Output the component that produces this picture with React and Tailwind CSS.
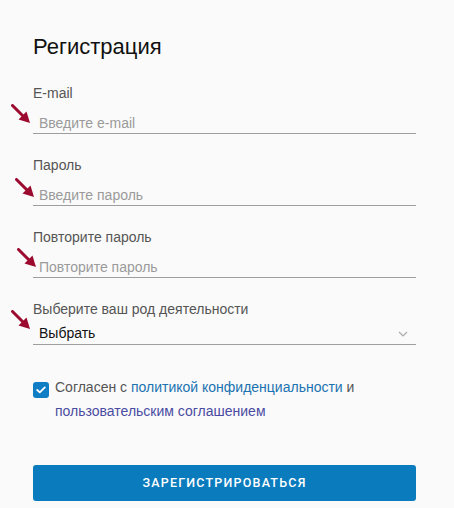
import React from "react";

function Arrow({ className }) {
  return (
    <svg className={className} width="20" height="20" viewBox="0 0 20 20">
      <line x1="1.5" y1="1.5" x2="12" y2="12" stroke="#9c0b2f" strokeWidth="3" strokeLinecap="round" />
      <polygon points="19,19 7.5,15.5 15.5,7.5" fill="#9c0b2f" />
    </svg>
  );
}

function Field({ label, placeholder, type = "text" }) {
  return (
    <div className="mb-[21px]">
      <div className="text-[14px] leading-[20px] text-[#555]">{label}</div>
      <input
        type={type}
        placeholder={placeholder}
        className="block w-full h-[31px] pt-[10px] pb-0 pl-[6px] text-[14px] leading-[20px] text-[#222] placeholder:text-[#9a9a9a] bg-transparent border-b border-[#9e9e9e] outline-none"
      />
    </div>
  );
}

export default function App() {
  return (
    <div
      className="relative w-[454px] h-[508px] bg-[#fafafa] pl-[33px] pr-[38px] pt-[33px]"
      style={{ fontFamily: '"Liberation Sans", Arial, sans-serif' }}
    >
      <h1 className="text-[22px] leading-[28px] text-[#111] font-normal mb-[22px]">Регистрация</h1>

      <Field label="E-mail" placeholder="Введите e-mail" />
      <Field label="Пароль" placeholder="Введите пароль" type="password" />
      <Field label="Повторите пароль" placeholder="Повторите пароль" type="password" />

      <div>
        <div className="text-[14px] leading-[20px] text-[#555]">Выберите ваш род деятельности</div>
        <div className="flex items-center justify-between h-[26px] pt-[3px] pl-[6px] pr-[8px] border-b border-[#9e9e9e]">
          <span className="text-[14px] leading-[20px] text-[#111]">Выбрать</span>
          <svg width="10" height="6" viewBox="0 0 10 6" className="mt-[1px]">
            <polyline points="1,1 5,5 9,1" fill="none" stroke="#aaa" strokeWidth="1.2" />
          </svg>
        </div>
      </div>

      <div className="flex items-start mt-[30px]">
        <div className="mt-[7px] w-[16px] h-[16px] shrink-0 rounded-[3px] bg-[#0f7ec4] flex items-center justify-center">
          <svg width="10" height="8" viewBox="0 0 10 8">
            <polyline points="1.2,4 3.8,6.4 8.8,1.4" fill="none" stroke="#fff" strokeWidth="1.8" strokeLinecap="round" strokeLinejoin="round" />
          </svg>
        </div>
        <p className="ml-[6px] text-[14px] leading-[24px] text-[#555]">
          Согласен с <span className="text-[#1a72b0]">политикой конфиденциальности</span> и{" "}
          <span className="text-[#4a4ca2]">пользовательским соглашением</span>
        </p>
      </div>

      <button
        className="mt-[42px] w-full h-[36px] rounded-[3px] bg-[#0a7bbd] text-white text-[12.5px] font-medium tracking-[1.2px]"
        style={{ fontFamily: 'Roboto, "Liberation Sans", sans-serif' }}
      >
        ЗАРЕГИСТРИРОВАТЬСЯ
      </button>

      <Arrow className="absolute left-[11px] top-[104px]" />
      <Arrow className="absolute left-[15px] top-[178px]" />
      <Arrow className="absolute left-[17px] top-[248px]" />
      <Arrow className="absolute left-[11px] top-[310px]" />
    </div>
  );
}
